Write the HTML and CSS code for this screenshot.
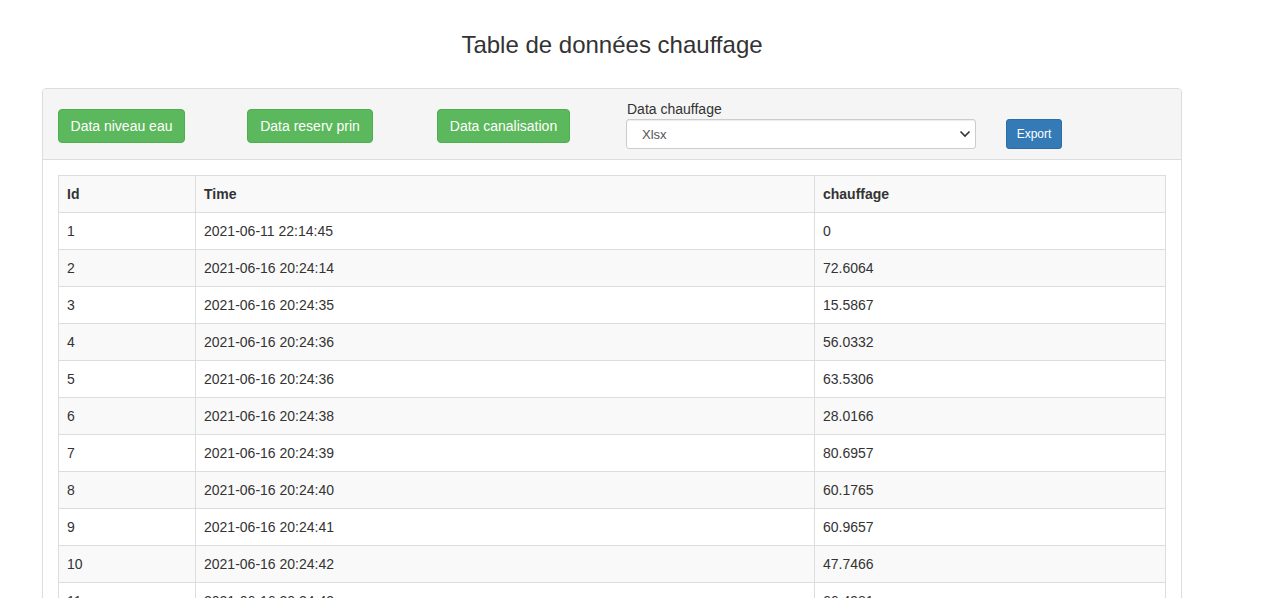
FILE: index.html
```html
<!DOCTYPE html>
<html lang="fr">
<head>
<meta charset="utf-8">
<title>Table de données chauffage</title>
<link rel="stylesheet" href="styles.css">
</head>
<body>
<div class="container">
  <h3 class="title">Table de données chauffage</h3>
  <div class="panel">
    <div class="panel-heading">
      <button class="btn btn-success b1">Data niveau eau</button>
      <button class="btn btn-success b2">Data reserv prin</button>
      <button class="btn btn-success b3">Data canalisation</button>
      <div class="form-group">
        <label class="lbl">Data chauffage</label>
        <div class="select-wrap">
          <select class="form-control"><option>Xlsx</option></select>
          <svg class="chev" width="12" height="8" viewBox="0 0 12 8"><path d="M1.5 1.5 L6 6 L10.5 1.5" fill="none" stroke="#333" stroke-width="1.6"/></svg>
        </div>
      </div>
      <button class="btn btn-primary btn-sm export">Export</button>
    </div>
    <div class="panel-body">
      <table class="table">
        <colgroup><col class="c1"><col class="c2"><col class="c3"></colgroup>
        <tbody>
          <tr><th>Id</th><th>Time</th><th>chauffage</th></tr>
          <tr><td>1</td><td>2021-06-11 22:14:45</td><td>0</td></tr>
          <tr><td>2</td><td>2021-06-16 20:24:14</td><td>72.6064</td></tr>
          <tr><td>3</td><td>2021-06-16 20:24:35</td><td>15.5867</td></tr>
          <tr><td>4</td><td>2021-06-16 20:24:36</td><td>56.0332</td></tr>
          <tr><td>5</td><td>2021-06-16 20:24:36</td><td>63.5306</td></tr>
          <tr><td>6</td><td>2021-06-16 20:24:38</td><td>28.0166</td></tr>
          <tr><td>7</td><td>2021-06-16 20:24:39</td><td>80.6957</td></tr>
          <tr><td>8</td><td>2021-06-16 20:24:40</td><td>60.1765</td></tr>
          <tr><td>9</td><td>2021-06-16 20:24:41</td><td>60.9657</td></tr>
          <tr><td>10</td><td>2021-06-16 20:24:42</td><td>47.7466</td></tr>
          <tr><td>11</td><td>2021-06-16 20:24:43</td><td>66.4981</td></tr>
          <tr><td>12</td><td>2021-06-16 20:24:44</td><td>33.1027</td></tr>
        </tbody>
      </table>
    </div>
  </div>
</div>
</body>
</html>
```

FILE: styles.css
```css
* { box-sizing: border-box; }
html, body { margin: 0; padding: 0; background: #fff; }
body {
  font-family: "Liberation Sans", Arial, sans-serif;
  font-size: 14px;
  line-height: 20px;
  color: #333;
}
.container {
  width: 1140px;
  margin-left: 42px;
}
.title {
  margin: 31px 0 30px;
  font-size: 24px;
  line-height: 27px;
  font-weight: normal;
  text-align: center;
  color: #333;
}
.panel {
  border: 1px solid #ddd;
  border-radius: 4px;
  background: #fff;
  box-shadow: 0 1px 1px rgba(0,0,0,.05);
}
.panel-heading {
  display: flex;
  align-items: flex-start;
  background: #f5f5f5;
  border-bottom: 1px solid #ddd;
  border-radius: 3px 3px 0 0;
  padding: 10px 15px;
}
.btn {
  font-family: inherit;
  font-size: 14px;
  line-height: 20px;
  padding: 6px 0;
  text-align: center;
  border: 1px solid transparent;
  border-radius: 4px;
  color: #fff;
  cursor: pointer;
}
.btn-success {
  background: #5cb85c;
  border-color: #4cae4c;
  margin-top: 10px;
}
.b1 { width: 127px; }
.b2 { width: 126px; margin-left: 62px; }
.b3 { width: 133px; margin-left: 64px; }
.form-group {
  margin-left: 56px;
  width: 350px;
}
.lbl {
  display: block;
  padding-left: 1px;
  line-height: 20px;
}
.select-wrap { position: relative; }
.form-control {
  display: block;
  width: 350px;
  height: 30px;
  padding: 0 15px;
  font-family: inherit;
  font-size: 13px;
  color: #555;
  background: #fff;
  border: 1px solid #ccc;
  border-radius: 3px;
  appearance: none;
  -webkit-appearance: none;
  box-shadow: inset 0 1px 1px rgba(0,0,0,.075);
}
.chev {
  position: absolute;
  right: 5px;
  top: 11px;
  pointer-events: none;
}
.btn-primary {
  background: #337ab7;
  border-color: #2e6da4;
}
.btn-sm {
  font-size: 12px;
  line-height: 18px;
  padding: 5px 0;
  border-radius: 3px;
}
.export {
  width: 56px;
  margin-left: 30px;
  margin-top: 20px;
}
.panel-body {
  padding: 15px;
}
.table {
  width: 100%;
  border-collapse: collapse;
  border: 1px solid #ddd;
}
.c1 { width: 137px; }
.c2 { width: 619px; }
.table th, .table td {
  border: 1px solid #ddd;
  padding: 8px;
  line-height: 20px;
  text-align: left;
  vertical-align: top;
}
.table th { font-weight: bold; }
.table tr:nth-of-type(odd) { background: #f9f9f9; }
```
